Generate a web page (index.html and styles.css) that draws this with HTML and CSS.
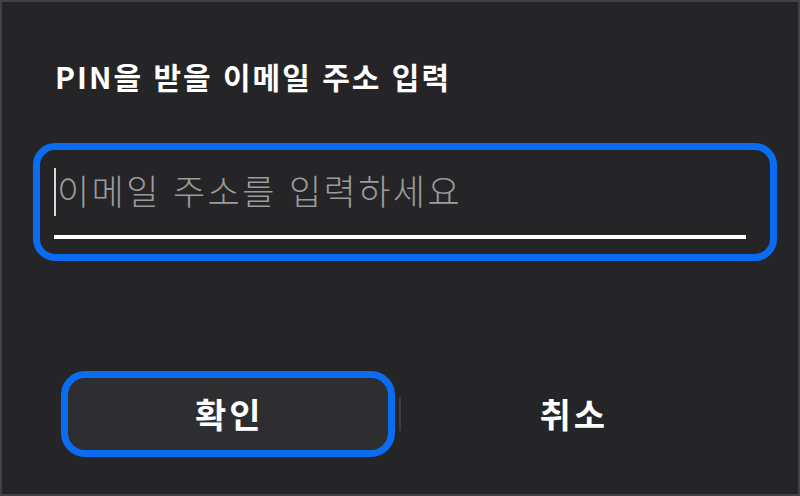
FILE: index.html
```html
<!DOCTYPE html>
<html lang="ko">
<head>
<meta charset="utf-8">
<link rel="stylesheet" href="styles.css">
</head>
<body>
<div class="dialog">
  <h1 class="title">PIN을 받을 이메일 주소 입력</h1>
  <div class="field">
    <div class="input">
      <span class="caret"></span>
      <span class="placeholder">이메일 주소를 입력하세요</span>
    </div>
    <div class="underline"></div>
  </div>
  <div class="actions">
    <button class="btn btn-primary">확인</button>
    <span class="divider"></span>
    <button class="btn">취소</button>
  </div>
</div>
</body>
</html>
```
FILE: styles.css
```css
html, body {
  margin: 0;
  padding: 0;
  background: #252527;
}
.dialog {
  box-sizing: border-box;
  width: 800px;
  height: 496px;
  border: 2px solid #434345;
  background: #252527;
  font-family: "Noto Sans CJK KR", "Noto Sans", sans-serif;
  color: #ffffff;
  display: flex;
  flex-direction: column;
  padding: 0 21px 0 31px;
}
.title {
  margin: 54px 0 0 22px;
  font-size: 30px;
  font-weight: 700;
  line-height: 40px;
  letter-spacing: 2px;
}
.field {
  margin-top: 47px;
  height: 118px;
  box-sizing: border-box;
  border: 7px solid #0a6cf0;
  border-radius: 22px;
  padding: 12px 24px 0 14px;
  display: flex;
  flex-direction: column;
}
.input {
  display: flex;
  align-items: center;
  height: 60px;
}
.caret {
  width: 2px;
  height: 48px;
  background: #d8d8d8;
  margin-right: 1px;
}
.placeholder {
  font-size: 35px;
  font-weight: 300;
  color: #9b9b9d;
  letter-spacing: 2.4px;
  line-height: 48px;
  margin-top: -5px;
}
.underline {
  margin-top: 13px;
  height: 4px;
  background: #ffffff;
}
.actions {
  margin-top: 110px;
  margin-left: 28px;
  margin-right: 38px;
  display: flex;
  align-items: center;
}
.btn {
  flex: 1;
  height: 86px;
  box-sizing: border-box;
  border: 7px solid transparent;
  border-radius: 24px;
  background: transparent;
  color: #ffffff;
  font-family: "Noto Sans CJK KR", "Noto Sans", sans-serif;
  font-size: 34px;
  font-weight: 700;
  letter-spacing: 3px;
  padding: 0 0 2px 3px;
}
.btn-primary {
  border-color: #0a6cf0;
  background: #2e2e31;
}
.divider {
  width: 2px;
  height: 34px;
  background: #3e3e41;
  margin: 0 5px 0 4px;
}
```
